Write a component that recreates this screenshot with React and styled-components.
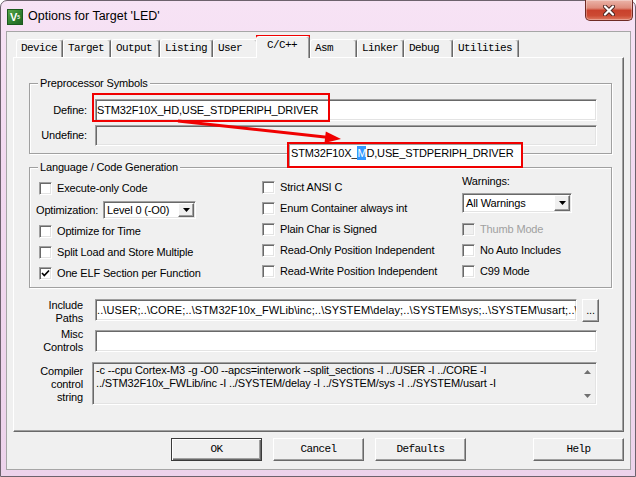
import React from "react";
import styled, { createGlobalStyle } from "styled-components";

const ui = `"Liberation Sans", Arial, sans-serif`;
const mono = `"Liberation Mono", "Courier New", monospace`;

const GlobalStyle = createGlobalStyle`
  html, body { margin: 0; padding: 0; background: #ffffff; }
  body { font-family: ${ui}; font-size: 11px; color: #000; letter-spacing: -0.15px; }
  * { box-sizing: border-box; }
`;

const sunken = `
  border: 1px solid;
  border-color: #a0a0a0 #ffffff #ffffff #a0a0a0;
  box-shadow: inset 1px 1px 0 #696969, inset -1px -1px 0 #e3e3e3;
`;

const raised = `
  border: 1px solid;
  border-color: #ffffff #696969 #696969 #ffffff;
  box-shadow: inset -1px -1px 0 #a0a0a0;
`;

const Window = styled.div`
  position: relative;
  width: 636px;
  height: 477px;
  display: flex;
  flex-direction: column;
  border: 1px solid #6d626d;
  border-radius: 7px 7px 0 0;
  background: linear-gradient(180deg, #f7e3f5 0%, #f2d9f0 35%, #edd3eb 100%);
`;

const TitleBar = styled.div`
  flex: none;
  height: 30px;
  display: flex;
  align-items: flex-start;
  padding-left: 6px;
`;

const AppIcon = styled.div`
  width: 16px;
  height: 16px;
  margin-top: 8px;
  border: 1px solid #1b5a1e;
  background: linear-gradient(135deg, #5aa648 0%, #2c7d2e 60%, #1f6522 100%);
  color: #fff;
  font: bold 11px/14px ${ui};
  display: flex;
  align-items: center;
  justify-content: center;
  sub {
    font-size: 5px;
    line-height: 5px;
    vertical-align: -3px;
  }
`;

const Title = styled.div`
  margin: 8px 0 0 5px;
  font: 12.5px/15px ${ui};
  letter-spacing: 0;
  color: #000;
`;

const CloseBtn = styled.div`
  margin: -1px 2px 0 auto;
  width: 48px;
  height: 21px;
  border: 1px solid #6f2b25;
  border-top: none;
  border-radius: 0 0 5px 5px;
  background: linear-gradient(180deg, #ebb4a9 0%, #de8b7b 40%, #c9412c 52%, #cc4a33 78%, #df7a62 100%);
  box-shadow: inset 0 0 0 1px rgba(255, 255, 255, 0.3);
  display: flex;
  align-items: center;
  justify-content: center;
`;

const Client = styled.div`
  flex: 1;
  margin: 0 4px 6px 5px;
  border: 1px solid #a6a6a6;
  background: #f0f0f0;
  display: flex;
  flex-direction: column;
  padding: 3px 6px 0;
`;

const TabStrip = styled.div`
  flex: none;
  height: 22px;
  display: flex;
  align-items: flex-end;
  padding-left: 3px;
`;

const Tab = styled.div`
  position: relative;
  z-index: ${(p) => (p.$active ? 2 : 1)};
  flex: none;
  width: ${(p) => p.$w}px;
  height: ${(p) => (p.$active ? 22 : 18)}px;
  margin: ${(p) => (p.$active ? "0 0 -1px -2px" : "0")};
  border-style: solid;
  border-width: 1px 1px 0 1px;
  border-color: #ffffff #696969 transparent #ffffff;
  box-shadow: inset -1px 0 0 #a0a0a0;
  border-radius: 3px 3px 0 0;
  background: #f0f0f0;
  padding-left: ${(p) => (p.$active ? 10 : 4)}px;
  font: 11px/17px ${mono};
  letter-spacing: -0.6px;
  color: #000;
  white-space: nowrap;
`;

const Panel = styled.div`
  flex: none;
  height: 375px;
  border: 1px solid;
  border-color: #ffffff #696969 #696969 #ffffff;
  box-shadow: inset -1px -1px 0 #a0a0a0;
  padding: 25px 11px 0 15px;
  display: flex;
  flex-direction: column;
`;

const Group = styled.div`
  position: relative;
  margin-top: ${(p) => p.$mt || 0}px;
  border: 1px solid #a0a0a0;
  box-shadow: inset 1px 1px 0 #ffffff, 1px 1px 0 #ffffff;
  padding: ${(p) => p.$pad};
`;

const Legend = styled.span`
  position: absolute;
  top: -7px;
  left: 8px;
  padding: 0 2px;
  background: #f0f0f0;
  font: 11px/13px ${ui};
  white-space: nowrap;
`;

const FieldGrid = styled.div`
  display: grid;
  grid-template-columns: 57px minmax(0, 1fr);
  column-gap: 8px;
  row-gap: 4px;
  align-items: center;
`;

const FieldLabel = styled.div`
  text-align: right;
  font: 11px/13px ${ui};
  white-space: nowrap;
`;

const TextField = styled.div`
  ${sunken}
  flex: 1;
  min-width: 0;
  height: ${(p) => p.$h}px;
  background: ${(p) => (p.$disabled ? "#f0f0f0" : "#ffffff")};
  padding: 0 1px;
  display: flex;
  align-items: center;
  white-space: nowrap;
  overflow: hidden;
  font: 11px/13px ${ui};
  letter-spacing: ${(p) => (p.$spacing !== undefined ? p.$spacing : -0.15)}px;
`;

const LangGrid = styled.div`
  display: grid;
  grid-template-columns: 223px 200px 1fr;
  align-items: start;
`;

const Column = styled.div`
  display: flex;
  flex-direction: column;
  padding-top: ${(p) => p.$top}px;
`;

const CheckRow = styled.div`
  display: flex;
  align-items: center;
  gap: 5px;
  height: 21px;
  margin-top: ${(p) => p.$mt || 0}px;
  color: ${(p) => (p.$disabled ? "#a0a0a0" : "#000")};
  font: 11px/13px ${ui};
  white-space: nowrap;
`;

const Box = styled.span`
  ${sunken}
  flex: none;
  width: 13px;
  height: 13px;
  background: ${(p) => (p.$disabled ? "#f0f0f0" : "#ffffff")};
  display: flex;
  align-items: center;
  justify-content: center;
`;

const OptRow = styled.div`
  display: flex;
  align-items: center;
  height: 22px;
  margin-left: -3px;
  font: 11px/13px ${ui};
`;

const OptLabel = styled.span`
  width: 67px;
  flex: none;
  white-space: nowrap;
`;

const WarnLabel = styled.div`
  height: 16px;
  font: 11px/16px ${ui};
`;

const Select = styled.div`
  ${sunken}
  width: ${(p) => p.$w}px;
  height: ${(p) => p.$h}px;
  margin-top: ${(p) => p.$mt || 0}px;
  background: #ffffff;
  display: flex;
  align-items: stretch;
  padding: 1px 1px 1px 3px;
  font: 11px/13px ${ui};
`;

const SelectText = styled.span`
  flex: 1;
  display: flex;
  align-items: center;
  white-space: nowrap;
`;

const SelectBtn = styled.span`
  ${raised}
  width: 16px;
  background: #f0f0f0;
  display: flex;
  align-items: center;
  justify-content: center;
`;

const Extra = styled.div`
  margin-top: 11px;
  padding-right: 15px;
  display: flex;
  flex-direction: column;
`;

const ExtraRow = styled.div`
  display: flex;
  align-items: flex-start;
  gap: 12px;
  height: ${(p) => p.$h}px;
  margin-top: ${(p) => p.$mt || 0}px;
`;

const SideLabel = styled.div`
  flex: none;
  width: 54px;
  margin-top: ${(p) => p.$shift}px;
  text-align: right;
  font: 11px/13px ${ui};
`;

const BrowseBtn = styled.div`
  ${raised}
  flex: none;
  width: 17px;
  height: 23px;
  margin: 0 -2px 0 -7px;
  background: #f0f0f0;
  font: 11px/13px ${ui};
  display: flex;
  align-items: flex-end;
  justify-content: center;
  padding-bottom: 4px;
`;

const CompilerField = styled.div`
  ${sunken}
  flex: 1;
  min-width: 0;
  height: 43px;
  margin-left: -3px;
  background: #f0f0f0;
  display: flex;
  font: 11px/13px ${ui};
`;

const CompilerText = styled.div`
  flex: 1;
  min-width: 0;
  padding: 1px 0 0 3px;
  white-space: nowrap;
  overflow: hidden;
`;

const ScrollCol = styled.div`
  flex: none;
  width: 17px;
  display: flex;
  flex-direction: column;
  justify-content: space-between;
  align-items: center;
  padding: 7px 0 6px;
`;

const ButtonBar = styled.div`
  display: flex;
  justify-content: flex-end;
  gap: 11px;
  margin-top: 6px;
`;

const DlgButton = styled.button`
  ${raised}
  width: 91px;
  height: 23px;
  margin-left: ${(p) => p.$ml || 0}px;
  padding: 0;
  background: #f0f0f0;
  font: 11px/1 ${mono};
  letter-spacing: -0.6px;
  color: #000;
  ${(p) =>
    p.$default &&
    `
    border: 1px solid #3a3a3a;
    box-shadow: inset 1px 1px 0 #ffffff, inset -1px -1px 0 #696969, inset -2px -2px 0 #a0a0a0;
  `}
`;

const Overlay = styled.div`
  position: absolute;
  left: -1px;
  top: -1px;
  width: 636px;
  height: 477px;
  pointer-events: none;
`;

const Mark = styled.div`
  position: absolute;
  left: ${(p) => p.$x}px;
  top: ${(p) => p.$y}px;
  width: ${(p) => p.$w}px;
  height: ${(p) => p.$h}px;
  border: 2px solid #f00000;
  background: ${(p) => (p.$fill ? "#ffffff" : "transparent")};
`;

const MarkField = styled.div`
  height: 100%;
  border-top: 1px solid #a0a0a0;
  border-left: 1px solid #a0a0a0;
  padding: 2px 0 0 1px;
  font: 11px/13px ${ui};
  white-space: nowrap;
`;

const Hl = styled.span`
  background: #3399ff;
  color: #ffffff;
  padding: 1px 0;
`;

const Arrow = styled.svg`
  position: absolute;
  left: 0;
  top: 0;
`;

const tabs = [
  ["Device", 47],
  ["Target", 48],
  ["Output", 49],
  ["Listing", 53],
  ["User", 45],
  ["C/C++", 54, true],
  ["Asm", 47],
  ["Linker", 47],
  ["Debug", 49],
  ["Utilities", 66],
];

const Tick = () => (
  <svg width="9" height="9" viewBox="0 0 9 9">
    <path d="M1 4 L3.3 6.5 L8 1.5" stroke="#000" strokeWidth="1.7" fill="none" />
  </svg>
);

const Caret = () => (
  <svg width="7" height="4" viewBox="0 0 7 4">
    <polygon points="0,0 7,0 3.5,4" fill="#000" />
  </svg>
);

const Check = ({ label, checked, disabled, mt }) => (
  <CheckRow $disabled={disabled} $mt={mt}>
    <Box $disabled={disabled}>{checked && <Tick />}</Box>
    {label}
  </CheckRow>
);

const Dropdown = ({ w, h, mt, value }) => (
  <Select $w={w} $h={h} $mt={mt}>
    <SelectText>{value}</SelectText>
    <SelectBtn>
      <Caret />
    </SelectBtn>
  </Select>
);

export default function App() {
  return (
    <>
      <GlobalStyle />
      <Window>
        <TitleBar>
          <AppIcon>
            V<sub>5</sub>
          </AppIcon>
          <Title>Options for Target 'LED'</Title>
          <CloseBtn>
            <svg width="12" height="11" viewBox="0 0 12 11">
              <path d="M2 1.5 L10 9.5 M10 1.5 L2 9.5" stroke="#4a2420" strokeWidth="4" strokeLinecap="round" />
              <path d="M2 1.5 L10 9.5 M10 1.5 L2 9.5" stroke="#ffffff" strokeWidth="2.2" strokeLinecap="round" />
            </svg>
          </CloseBtn>
        </TitleBar>

        <Client>
          <TabStrip>
            {tabs.map(([name, w, active]) => (
              <Tab key={name} $w={w} $active={active}>
                {name}
              </Tab>
            ))}
          </TabStrip>

          <Panel>
            <Group $pad="15px 14px 7px 0">
              <Legend>Preprocessor Symbols</Legend>
              <FieldGrid>
                <FieldLabel>Define:</FieldLabel>
                <TextField $h={22}>STM32F10X_HD,USE_STDPERIPH_DRIVER</TextField>
                <FieldLabel>Undefine:</FieldLabel>
                <TextField $h={21} $disabled />
              </FieldGrid>
            </Group>

            <Group $mt={13} $pad="0 0 3px 9px">
              <Legend>Language / Code Generation</Legend>
              <LangGrid>
                <Column $top={10}>
                  <Check label="Execute-only Code" />
                  <OptRow>
                    <OptLabel>Optimization:</OptLabel>
                    <Dropdown w={93} h={18} value="Level 0 (-O0)" />
                  </OptRow>
                  <Check label="Optimize for Time" />
                  <Check label="Split Load and Store Multiple" />
                  <Check label="One ELF Section per Function" checked />
                </Column>
                <Column $top={9}>
                  <Check label="Strict ANSI C" />
                  <Check label="Enum Container always int" />
                  <Check label="Plain Char is Signed" />
                  <Check label="Read-Only Position Independent" />
                  <Check label="Read-Write Position Independent" />
                </Column>
                <Column $top={5}>
                  <WarnLabel>Warnings:</WarnLabel>
                  <Dropdown w={110} h={20} mt={4} value="All Warnings" />
                  <Check label="Thumb Mode" disabled mt={6} />
                  <Check label="No Auto Includes" />
                  <Check label="C99 Mode" />
                </Column>
              </LangGrid>
            </Group>

            <Extra>
              <ExtraRow $h={23}>
                <SideLabel $shift={0}>
                  Include
                  <br />
                  Paths
                </SideLabel>
                <TextField $h={22} $spacing={0.1}>
                  {"..\\USER;..\\CORE;..\\STM32F10x_FWLib\\inc;..\\SYSTEM\\delay;..\\SYSTEM\\sys;..\\SYSTEM\\usart;..\\"}
                </TextField>
                <BrowseBtn>...</BrowseBtn>
              </ExtraRow>

              <ExtraRow $h={22} $mt={8}>
                <SideLabel $shift={-2.5}>
                  Misc
                  <br />
                  Controls
                </SideLabel>
                <TextField $h={22} />
              </ExtraRow>

              <ExtraRow $h={43} $mt={10}>
                <SideLabel $shift={2.5}>
                  Compiler
                  <br />
                  control
                  <br />
                  string
                </SideLabel>
                <CompilerField>
                  <CompilerText>
                    <div>-c --cpu Cortex-M3 -g -O0 --apcs=interwork --split_sections -I ../USER -I ../CORE -I</div>
                    <div>../STM32F10x_FWLib/inc -I ../SYSTEM/delay -I ../SYSTEM/sys -I ../SYSTEM/usart -I</div>
                  </CompilerText>
                  <ScrollCol>
                    <svg width="7" height="4" viewBox="0 0 7 4">
                      <polygon points="0,4 7,4 3.5,0" fill="#707070" />
                    </svg>
                    <svg width="7" height="4" viewBox="0 0 7 4">
                      <polygon points="0,0 7,0 3.5,4" fill="#707070" />
                    </svg>
                  </ScrollCol>
                </CompilerField>
              </ExtraRow>
            </Extra>
          </Panel>

          <ButtonBar>
            <DlgButton $default>OK</DlgButton>
            <DlgButton>Cancel</DlgButton>
            <DlgButton>Defaults</DlgButton>
            <DlgButton $ml={56}>Help</DlgButton>
          </ButtonBar>
        </Client>

        <Overlay>
          <Mark $x={256} $y={35} $w={54} $h={22} />
          <Mark $x={92} $y={93} $w={238} $h={29} />
          <Arrow width="636" height="477" viewBox="0 0 636 477">
            <line x1="178" y1="121" x2="327" y2="137.3" stroke="#f00000" strokeWidth="3" />
            <polygon points="341,139 324.5,143 325.8,131.5" fill="#f00000" />
          </Arrow>
          <Mark $x={287} $y={142} $w={236} $h={26} $fill>
            <MarkField>
              STM32F10X_<Hl>M</Hl>D,USE_STDPERIPH_DRIVER
            </MarkField>
          </Mark>
        </Overlay>
      </Window>
    </>
  );
}
